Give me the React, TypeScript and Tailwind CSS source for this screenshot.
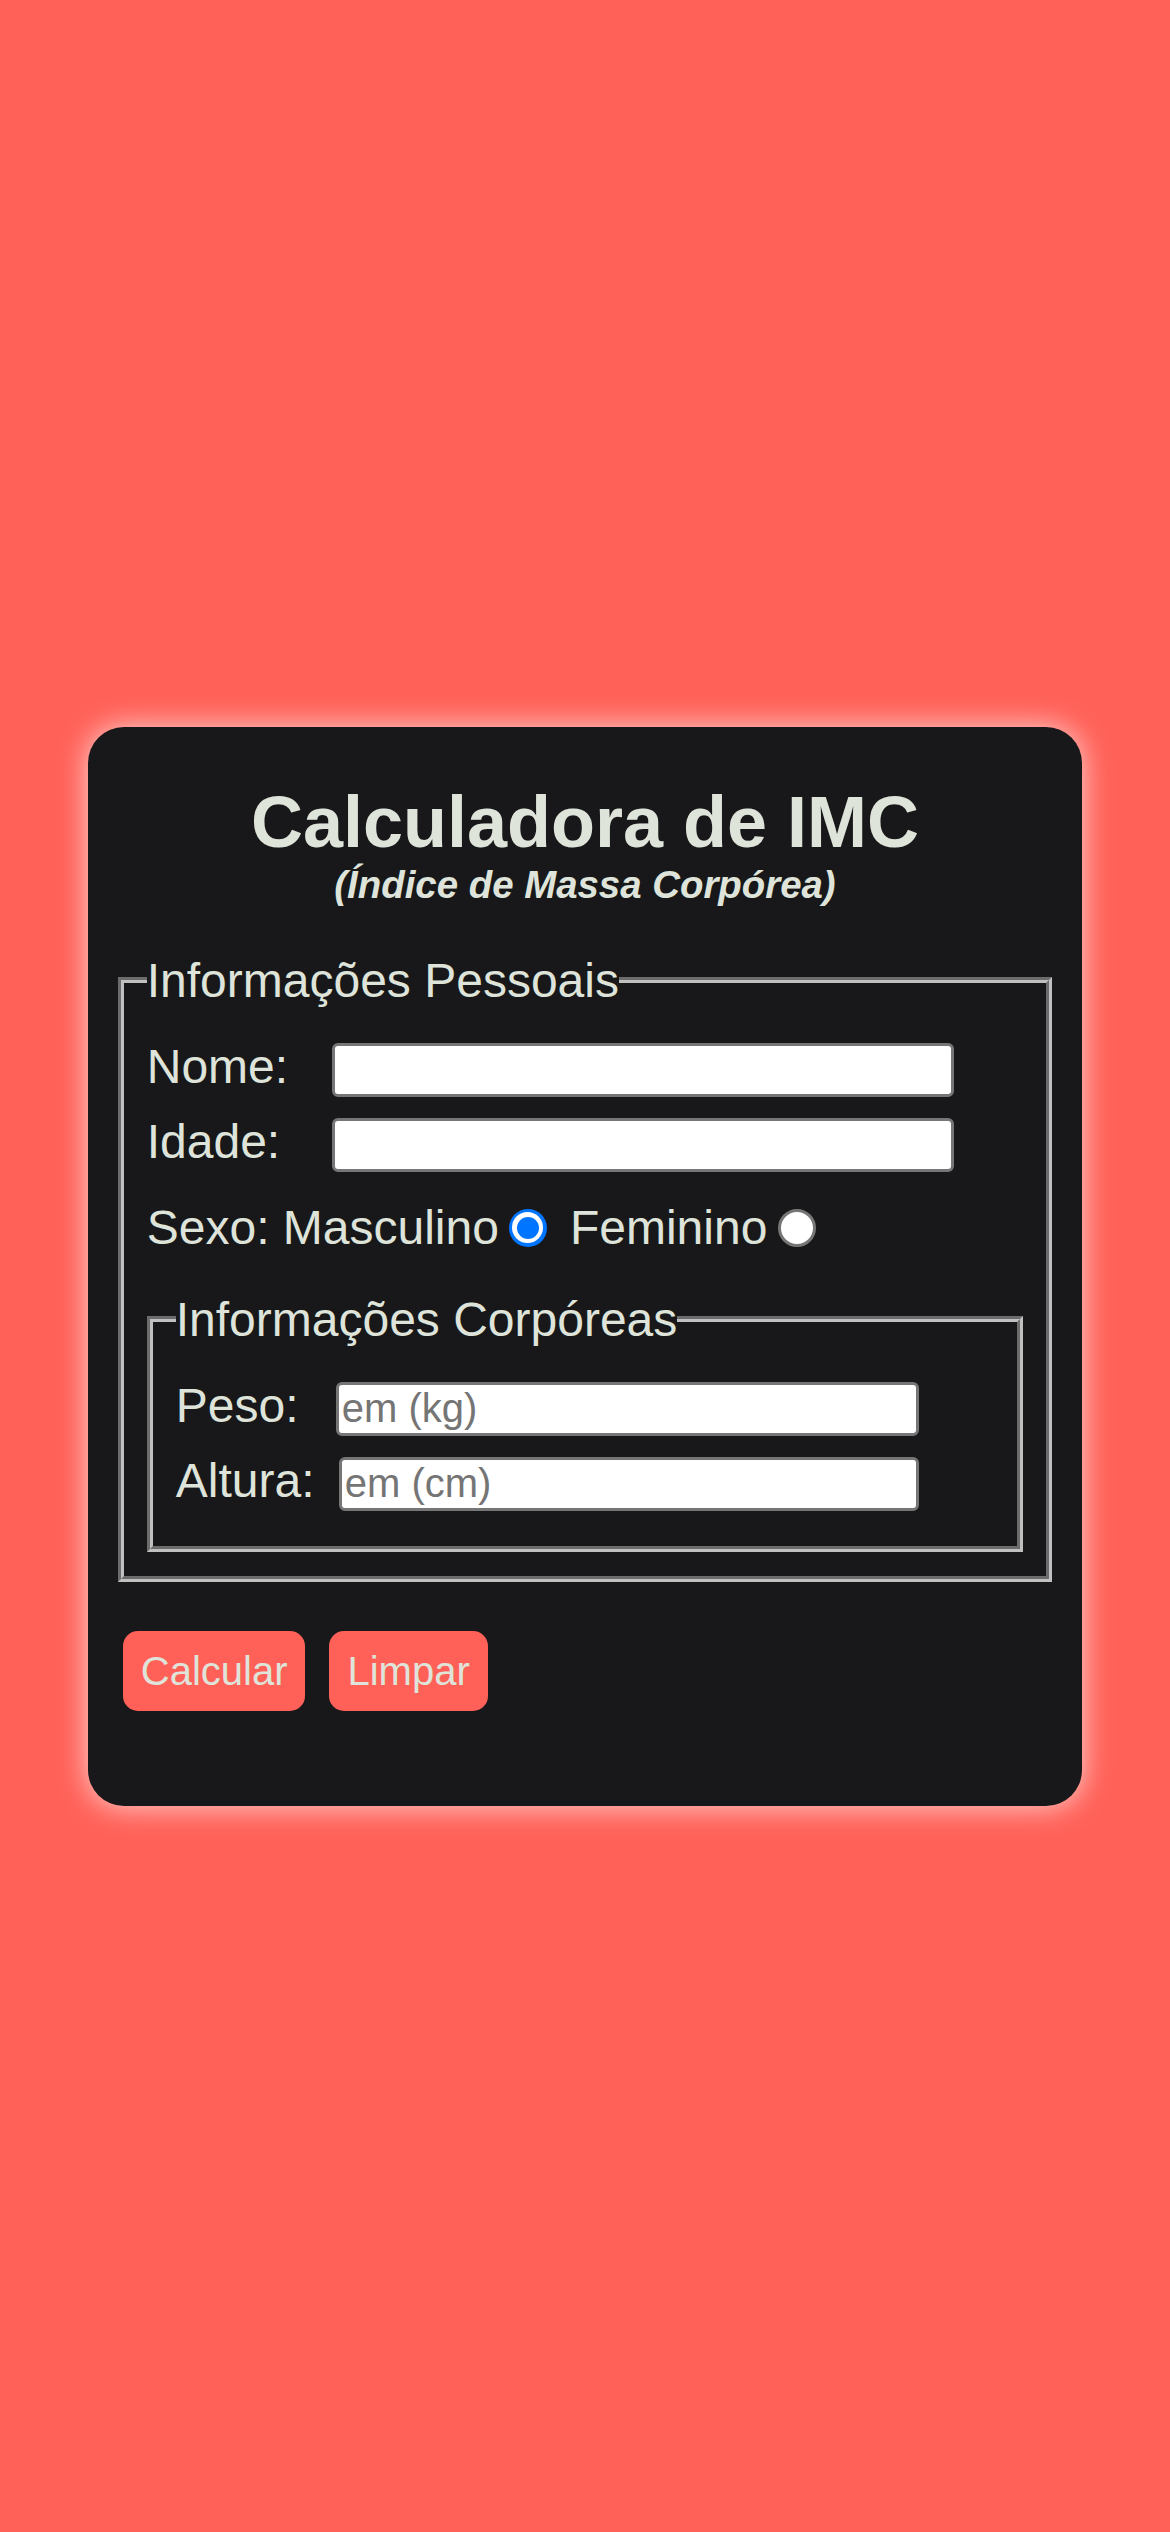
import React from "react";

function Radio({ checked }: { checked?: boolean }) {
	if (checked) {
		return (
			<span className="flex h-[38px] w-[38px] shrink-0 items-center justify-center rounded-full bg-[#0075ff]">
				<span className="flex h-[31px] w-[31px] items-center justify-center rounded-full bg-white">
					<span className="block h-[22px] w-[22px] rounded-full bg-[#0075ff]" />
				</span>
			</span>
		);
	}
	return (
		<span className="block h-[38px] w-[38px] shrink-0 rounded-full border-[3px] border-[#767676] bg-white" />
	);
}

function Field({
	label,
	labelW,
	inputW,
	placeholder,
	className = ""
}: {
	label: string;
	labelW: string;
	inputW: string;
	placeholder?: string;
	className?: string;
}) {
	return (
		<div className={"flex items-start h-[54px] " + className}>
			<label className={"leading-[48px] " + labelW}>{label}</label>
			<input
				type="text"
				placeholder={placeholder}
				className={
					"h-[54px] rounded-[6px] border-[3px] border-[#767676] bg-white px-[3px] text-[40px] leading-[46px] text-black placeholder:text-[#757575] outline-none " +
					inputW
				}
			/>
		</div>
	);
}

export default function App() {
	return (
		<div className="flex min-h-screen items-center justify-center bg-[#ff6158] font-['Liberation_Sans',Arial,sans-serif] text-[48px] text-[#dfe4da]">
			<div className="w-[85%] rounded-[36px] bg-[#18181a] px-[30px] pt-[54px] pb-[95px] shadow-[0_0_30px_rgba(255,255,255,0.75)]">
				{/* Cabeçalho */}
				<h1 className="text-center text-[72px] font-bold leading-[normal]">
					Calculadora de IMC
				</h1>
				<p className="text-center text-[38.4px] font-bold italic leading-[normal]">
					(Índice de Massa Corpórea)
				</p>

				{/* Formulário */}
				<fieldset className="mt-[46px] border-[6px] border-[#c0c0c0] [border-style:groove] px-[23px] pt-[35px] pb-[24px]">
					<legend className="leading-[normal]">Informações Pessoais</legend>

					<Field label="Nome:" labelW="w-[185px]" inputW="w-[622px]" />
					<Field label="Idade:" labelW="w-[185px]" inputW="w-[622px]" className="mt-[21px]" />

					<div className="mt-[32px] flex items-start leading-[48px]">
						<span>Sexo: Masculino</span>
						<span className="ml-[10px] mt-[5px]">
							<Radio checked />
						</span>
						<span className="ml-[23px]">Feminino</span>
						<span className="ml-[11px] mt-[5px]">
							<Radio />
						</span>
					</div>

					<fieldset className="mt-[40px] border-[6px] border-[#c0c0c0] [border-style:groove] px-[23px] pt-[35px] pb-[35px]">
						<legend className="leading-[normal]">Informações Corpóreas</legend>
						<Field label="Peso:" labelW="w-[160px]" inputW="w-[583px]" placeholder="em (kg)" />
						<Field
							label="Altura:"
							labelW="w-[163px]"
							inputW="w-[580px]"
							placeholder="em (cm)"
							className="mt-[21px]"
						/>
					</fieldset>
				</fieldset>

				<div className="ml-[5px] mt-[49px] flex gap-[24px]">
					<button className="rounded-[15px] bg-[#ff6158] px-[18px] py-[17px] text-[40px] leading-[46px] text-[#dfe4da]">
						Calcular
					</button>
					<button className="rounded-[15px] bg-[#ff6158] px-[18px] py-[17px] text-[40px] leading-[46px] text-[#dfe4da]">
						Limpar
					</button>
				</div>
			</div>
		</div>
	);
}
